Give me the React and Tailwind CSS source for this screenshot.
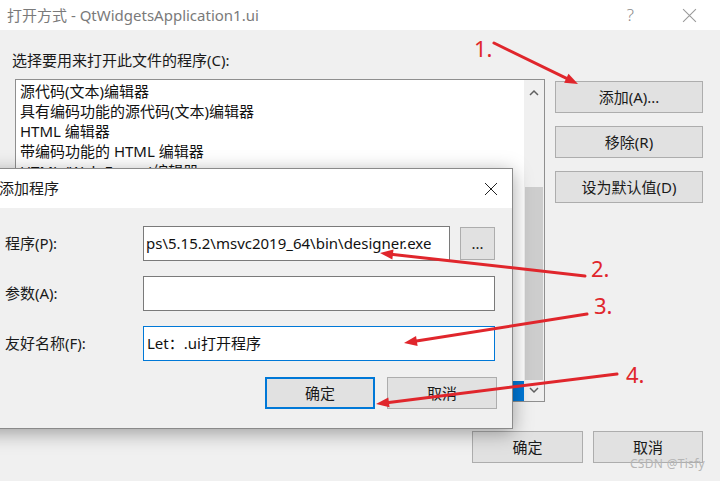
import React from 'react';

const font = { fontFamily: '"Noto Sans", "Noto Sans CJK SC", sans-serif' };

// only the rows above the dialog are readable; the rest sit under it
const listItems = [
  '源代码(文本)编辑器',
  '具有编码功能的源代码(文本)编辑器',
  'HTML 编辑器',
  '带编码功能的 HTML 编辑器',
  'HTML (Web Forms)编辑器',
];
const hiddenRows = 10;

function WinButton({ children, className = '', focused = false }) {
  return (
    <div
      className={
        'flex items-center justify-center bg-[#e1e1e1] text-[15px] text-[#1a1a1a] ' +
        (focused ? 'border-2 border-[#0078d7] ' : 'border border-[#adadad] ') +
        className
      }
    >
      {children}
    </div>
  );
}

function CloseIcon({ size = 14, color = '#000', width = 1 }) {
  return (
    <svg width={size} height={size} viewBox="0 0 14 14">
      <path d="M1 1 L13 13 M13 1 L1 13" stroke={color} strokeWidth={width} />
    </svg>
  );
}

function AddProgramDialog() {
  return (
    <div className="absolute left-[-40px] top-[138px] w-[553px] h-[261px] flex flex-col bg-[#f0f0f0] border border-[#8a8a8a] shadow-[0_4px_18px_rgba(0,0,0,0.35)]">
      <div className="h-[39px] bg-white flex items-center justify-between pl-[38px] pr-[14px]">
        <span className="text-[15px] text-[#1a1a1a]">添加程序</span>
        <CloseIcon size={14} color="#222" />
      </div>
      <div className="flex flex-col pl-[44px] pr-[17px] pt-[18px]">
        <div className="flex items-center h-[35px]">
          <span className="w-[138px] text-[15px] text-[#1a1a1a]">程序(P):</span>
          <div className="w-[307px] h-[35px] bg-white border border-[#7a7a7a] flex items-center px-[2px] overflow-hidden whitespace-nowrap text-[15px] text-[#111]">
            ps\5.15.2\msvc2019_64\bin\designer.exe
          </div>
          <WinButton className="ml-[10px] w-[35px] h-[33px] text-[13px]">...</WinButton>
        </div>
        <div className="flex items-center h-[35px] mt-[15px]">
          <span className="w-[138px] text-[15px] text-[#1a1a1a]">参数(A):</span>
          <div className="w-[352px] h-[35px] bg-white border border-[#7a7a7a]" />
        </div>
        <div className="flex items-center h-[35px] mt-[15px]">
          <span className="w-[138px] text-[15px] text-[#1a1a1a]">友好名称(F):</span>
          <div className="w-[352px] h-[35px] bg-white border border-[#0078d7] flex items-center px-[3px] text-[15px] text-[#111]">
            Let：.ui打开程序
          </div>
        </div>
        <div className="flex justify-end gap-[12px] mt-[16px]">
          <WinButton focused className="w-[110px] h-[32px]">确定</WinButton>
          <WinButton className="w-[110px] h-[32px] mr-[-2px]">取消</WinButton>
        </div>
      </div>
    </div>
  );
}

function Arrow({ x1, y1, x2, y2 }) {
  const dx = x2 - x1;
  const dy = y2 - y1;
  const len = Math.sqrt(dx * dx + dy * dy);
  const ux = dx / len;
  const uy = dy / len;
  const hl = 13;
  const hw = 5;
  const bx = x2 - ux * hl;
  const by = y2 - uy * hl;
  const p = `${x2},${y2} ${bx - uy * hw},${by + ux * hw} ${bx + uy * hw},${by - ux * hw}`;
  return (
    <g>
      <line x1={x1} y1={y1} x2={bx + ux * 2} y2={by + uy * 2} stroke="#e0262c" strokeWidth="3" strokeLinecap="round" />
      <polygon points={p} fill="#e0262c" />
    </g>
  );
}

export default function App() {
  return (
    <div className="relative w-[720px] h-[481px] overflow-hidden flex flex-col bg-[#f0f0f0]" style={font}>
      <div className="h-[30px] bg-white flex items-center pl-[7px] shrink-0">
        <span className="text-[15px] text-[#7a7a7a]">打开方式 - QtWidgetsApplication1.ui</span>
        <span className="ml-auto text-[17px] font-light text-[#8a8a8a] mr-[48px]">?</span>
        <span className="mr-[23px]">
          <CloseIcon size={15} color="#9a9a9a" />
        </span>
      </div>

      <div className="relative flex-1">
        <div className="absolute left-[12px] top-[19px] text-[15px] text-[#1a1a1a]">选择要用来打开此文件的程序(C):</div>

        <div className="flex pt-[49px] pl-[15px]">
          <div className="w-[530px] h-[323px] bg-white border border-[#8f8f8f] flex">
            <div className="flex-1 flex flex-col pt-[1px] overflow-hidden">
              {listItems.map((t) => (
                <div key={t} className="h-[20px] pl-[4px] flex items-center text-[15px] text-[#111] whitespace-nowrap">
                  {t}
                </div>
              ))}
              {Array.from({ length: hiddenRows }).map((_, i) => (
                <div key={i} className="h-[20px]" />
              ))}
              <div className="h-[20px] bg-[#0078d7]" />
            </div>
            <div className="w-[20px] bg-[#f0f0f0] flex flex-col items-center">
              <svg width="10" height="8" viewBox="0 0 10 8" className="mt-[9px]">
                <path d="M1 6 L5 2 L9 6" stroke="#606060" strokeWidth="1.5" fill="none" />
              </svg>
              <div className="w-[18px] h-[193px] bg-[#cdcdcd] mt-[90px]" />
              <svg width="10" height="8" viewBox="0 0 10 8" className="mt-[6px]">
                <path d="M1 2 L5 6 L9 2" stroke="#606060" strokeWidth="1.5" fill="none" />
              </svg>
            </div>
          </div>

          <div className="flex flex-col ml-[10px] pt-[2px] gap-[13px]">
            <WinButton className="w-[148px] h-[32px]">添加(A)...</WinButton>
            <WinButton className="w-[148px] h-[32px]">移除(R)</WinButton>
            <WinButton className="w-[148px] h-[32px]">设为默认值(D)</WinButton>
          </div>
        </div>

        <div className="flex justify-end gap-[10px] pr-[17px] mt-[29px]">
          <WinButton className="w-[111px] h-[32px]">确定</WinButton>
          <WinButton className="w-[110px] h-[32px]">取消</WinButton>
        </div>

        <AddProgramDialog />
      </div>

      <div className="absolute right-[15px] bottom-[8px] text-[12px] text-[#b5b5b5] tracking-[0.3px]">CSDN @Tisfy</div>

      <svg className="absolute inset-0 pointer-events-none" width="720" height="481" viewBox="0 0 720 481">
        <Arrow x1={494} y1={43} x2={578} y2={84} />
        <Arrow x1={585} y1={276} x2={380} y2={253} />
        <Arrow x1={587} y1={314} x2={404} y2={343} />
        <Arrow x1={617} y1={374} x2={376} y2={404} />
        <text x="474" y="57" fill="#e0262c" fontSize="22" fontFamily="Noto Sans, sans-serif">1.</text>
        <text x="591" y="277" fill="#e0262c" fontSize="22" fontFamily="Noto Sans, sans-serif">2.</text>
        <text x="594" y="314" fill="#e0262c" fontSize="22" fontFamily="Noto Sans, sans-serif">3.</text>
        <text x="626" y="383" fill="#e0262c" fontSize="22" fontFamily="Noto Sans, sans-serif">4.</text>
      </svg>
    </div>
  );
}
